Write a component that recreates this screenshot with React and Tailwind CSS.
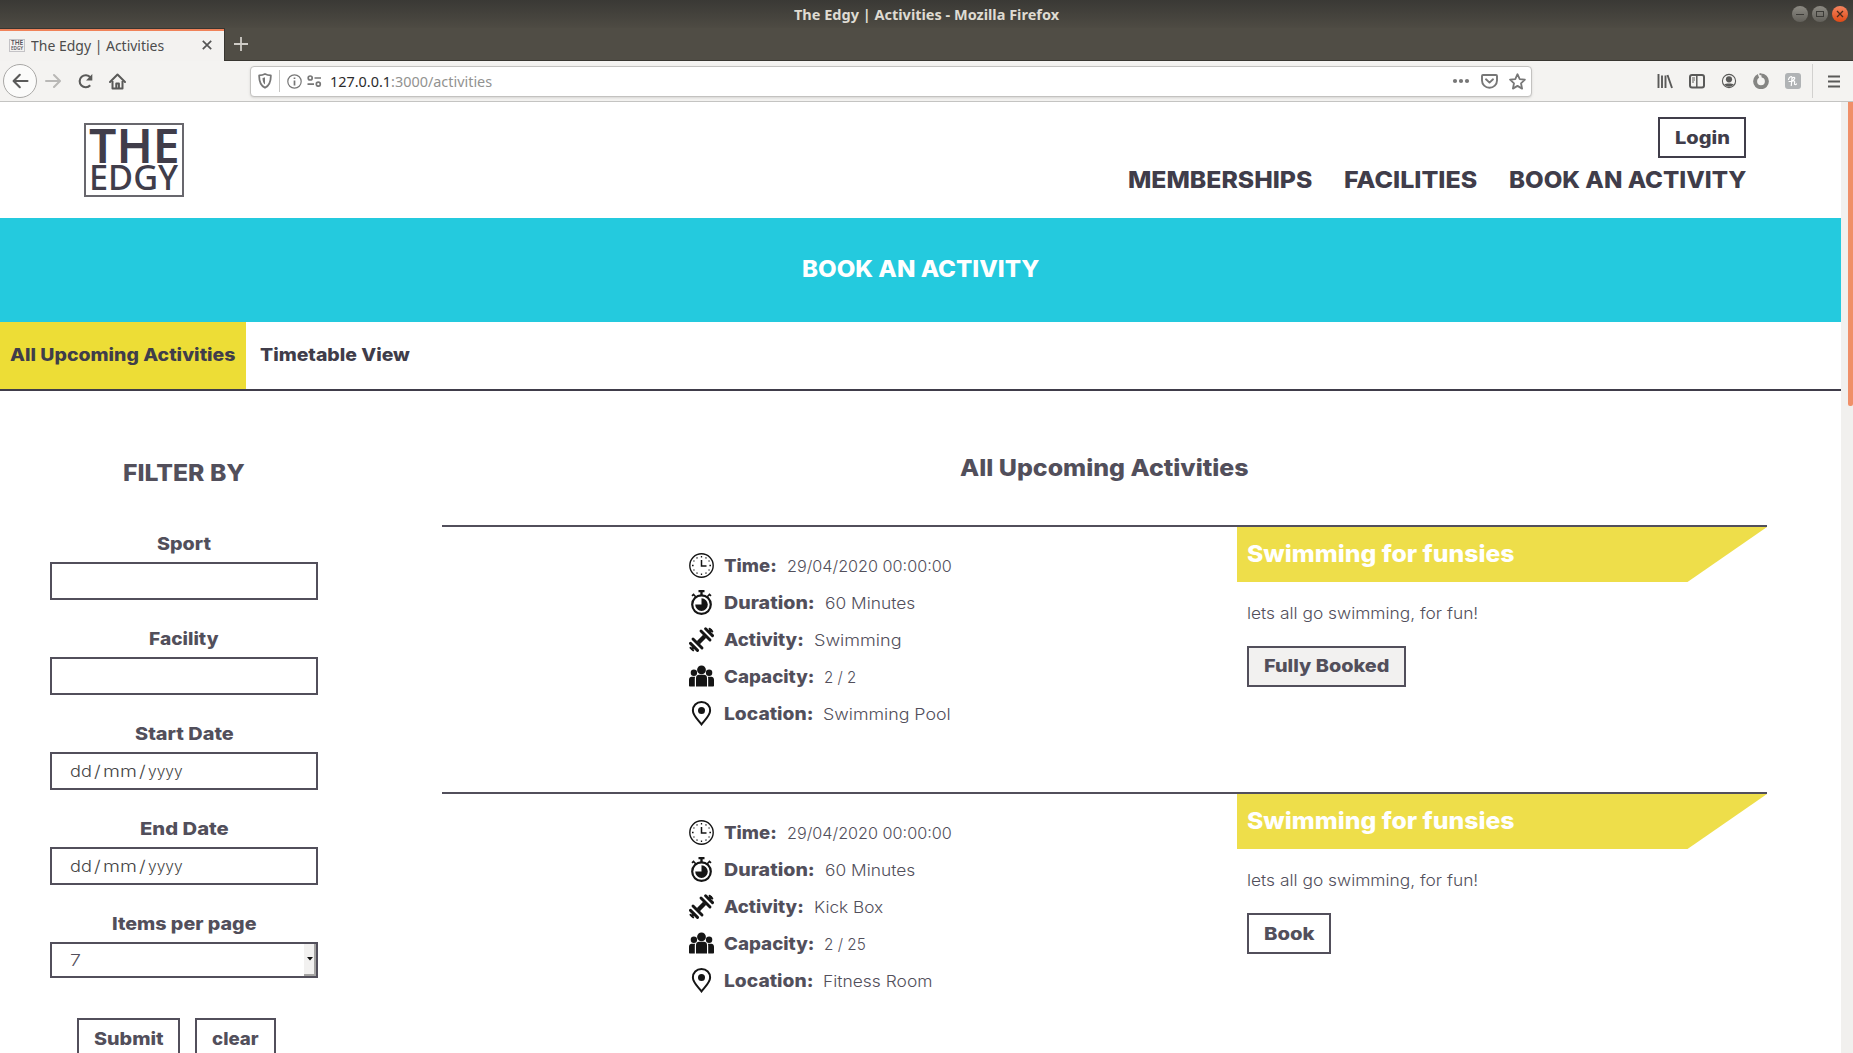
import React, { useLayoutEffect, useRef, useState } from "react";

/* Text set to a fixed measure: the glyphs are widened or narrowed to fill w pixels. */
function Fit({ w, className = "", children }) {
  const ref = useRef(null);
  const [scale, setScale] = useState(1);
  useLayoutEffect(() => {
    setScale(w / ref.current.offsetWidth);
  }, [w]);
  return (
    <span className={"inline-block text-left whitespace-pre shrink-0 " + className} style={{ width: w }}>
      <span ref={ref} className="inline-block origin-left" style={{ transform: `scaleX(${scale})` }}>
        {children}
      </span>
    </span>
  );
}

function WindowButton({ kind }) {
  const close = kind === "close";
  return (
    <svg width="16" height="18" viewBox="0 0 16 18">
      <defs>
        <linearGradient id={"wb-" + kind} x1="0" y1="0" x2="0" y2="1">
          <stop offset="0" stopColor={close ? "#f4845f" : "#8c8a83"} />
          <stop offset="1" stopColor={close ? "#df4a16" : "#62605a"} />
        </linearGradient>
      </defs>
      <circle cx="8" cy="9" r="8" fill={`url(#wb-${kind})`} />
      {kind === "min" && <path d="M4 9.5h8" stroke="#3c3b37" />}
      {kind === "max" && <rect x="4.5" y="6.5" width="7" height="5" fill="none" stroke="#3c3b37" />}
      {close && <path d="M5 6l6 6M11 6l-6 6" stroke="#4a2a1c" strokeWidth="1.3" />}
    </svg>
  );
}

function TitleBar() {
  return (
    <div className="h-[28px] relative flex items-center justify-center bg-linear-to-b from-[#3a3935] to-[#4e4b43] font-['Noto_Sans'] font-bold text-[14.5px] leading-[28px] text-[#dfdbd2]">
      <Fit w={265} className="-mt-px">The Edgy | Activities - Mozilla Firefox</Fit>
      <div className="absolute right-[5px] top-[5px] flex gap-1">
        <WindowButton kind="min" />
        <WindowButton kind="max" />
        <WindowButton kind="close" />
      </div>
    </div>
  );
}

function TabStrip() {
  return (
    <div className="h-[33px] flex bg-[#504d45]">
      <div className="w-[225px] h-full border-t border-r border-[#383631]">
        <div className="h-full border-t-2 border-[#f0835a] bg-[#f3f2f0] flex items-center pl-[9px] pb-[2px]">
          <div className="w-[16px] h-[13px] border border-[#c4c3c6] flex flex-col items-center justify-center text-[#55535c] font-['Noto_Sans'] font-semibold">
            <Fit w={12} className="text-[6.5px] leading-[6px]">THE</Fit>
            <Fit w={12} className="text-[5px] leading-[5px]">EDGY</Fit>
          </div>
          <Fit w={133} className="ml-[6px] -mt-px font-['Noto_Sans'] text-[14.5px] leading-[20px] text-[#4c4c4c]">The Edgy | Activities</Fit>
          <svg className="ml-[38px]" width="10" height="10" viewBox="0 0 10 10">
            <path d="M.8.8l8.4 8.4M9.2.8L.8 9.2" stroke="#555" strokeWidth="1.7" />
          </svg>
        </div>
      </div>
      <div className="flex-1 border-b border-[#383631] pl-[9px] pt-[9px]">
        <svg width="14" height="14" viewBox="0 0 14 14">
          <path d="M7 0v14M0 7h14" stroke="#cfccc6" strokeWidth="1.8" />
        </svg>
      </div>
    </div>
  );
}

function Toolbar() {
  return (
    <div className="h-[41px] flex items-center bg-[#f4f3f1] border-b border-[#c4c4c2] pl-[3px]">
      <div className="w-[34px] h-[34px] rounded-full border border-[#a9a8a6] bg-[#fbfbfa] flex items-center justify-center">
        <svg width="17" height="16" viewBox="0 0 17 16" fill="none" stroke="#5a5a59" strokeWidth="2.1" strokeLinecap="round" strokeLinejoin="round">
          <path d="M15.5 8H1.8M7.8 1.8L1.6 8l6.2 6.2" />
        </svg>
      </div>
      <svg className="ml-2" width="16" height="16" viewBox="0 0 16 16" fill="none" stroke="#b9b8b6" strokeWidth="2" strokeLinecap="round" strokeLinejoin="round">
        <path d="M1 8h13.5M9 2l6 6-6 6" />
      </svg>
      <svg className="ml-4" width="17" height="16" viewBox="0 0 17 16" fill="none" stroke="#5a5a59" strokeWidth="2.1">
        <path d="M13.2 12.2A6 6 0 1 1 13.4 4.6" />
        <path d="M15.3 1v6.4H9z" fill="#5a5a59" stroke="none" />
      </svg>
      <svg className="ml-[15px]" width="17" height="17" viewBox="0 0 17 17" fill="none" stroke="#5a5a59" strokeWidth="2" strokeLinejoin="round">
        <path d="M1 9l7.5-7.5L16 9" strokeLinecap="round" />
        <path d="M3.5 8v7.5h10V8M7.3 15.5v-5h2.6v5" />
      </svg>
      <div className="ml-[124px] w-[1282px] h-[31px] shrink-0 rounded-[4px] border border-[#c3c2c0] bg-white shadow-sm flex items-center pl-[7px]">
        <svg width="14" height="16" viewBox="0 0 14 16" fill="none" stroke="#777" strokeWidth="1.8" strokeLinejoin="round">
          <path d="M7 1C5 2 3 2.3 1.2 2.3 1 8.500 2.500 12.500 7 14.800c4.500-2.300 6-6.300 5.800-12.500C11 2.300 9 2 7 1z" />
          <path d="M7 4.300c-1 .5-1.600.6-2.500.7.1 3.200.8 5.200 2.500 6.500z" fill="#777" stroke="none" />
        </svg>
        <div className="ml-[7px] w-px h-[22px] bg-[#c6c6c4]" />
        <svg className="ml-[7px]" width="15" height="15" viewBox="0 0 15 15" fill="none" stroke="#777">
          <circle cx="7.500" cy="7.500" r="6.700" strokeWidth="1.200" />
          <path d="M7.500 6.500v5M7.500 3.400v1.700" strokeWidth="1.700" />
        </svg>
        <svg className="ml-[5px]" width="15" height="12" viewBox="0 0 15 12" fill="none" stroke="#777" strokeWidth="1.700">
          <circle cx="3.200" cy="3" r="2" />
          <path d="M7.500 3H14M.5 9.200h6.500" />
          <circle cx="11.300" cy="9.200" r="2" />
        </svg>
        <Fit w={162} className="ml-[8px] font-['Noto_Sans'] text-[14.5px] leading-[28px] text-[#929290]">
          <span className="text-[#2b2b2b]">127.0.0.1</span>:3000/activities
        </Fit>
        <div className="flex-1" />
        <svg width="18" height="6" viewBox="0 0 18 6" fill="#777">
          <circle cx="3" cy="3" r="2.100" /><circle cx="9" cy="3" r="2.100" /><circle cx="15" cy="3" r="2.100" />
        </svg>
        <svg className="ml-[11px]" width="17" height="15" viewBox="0 0 17 15" fill="none" stroke="#777" strokeWidth="1.900" strokeLinecap="round" strokeLinejoin="round">
          <path d="M2 1h13c.5 0 1 .4 1 1v4.500a7.500 7.200 0 0 1-15 0V2c0-.6.500-1 1-1z" />
          <path d="M5 5.300l3.500 3.300L12 5.300" />
        </svg>
        <svg className="ml-[11px] mr-[5px]" width="17" height="17" viewBox="0 0 17 17" fill="none" stroke="#777" strokeWidth="1.800" strokeLinejoin="round">
          <path d="M8.500 1.200l2.200 4.900 5.200.6-3.900 3.600 1.100 5.300-4.600-2.700-4.600 2.700L5 10.300 1.100 6.700l5.200-.6z" />
        </svg>
      </div>
      <div className="ml-[125px] flex items-center gap-4">
        <svg width="16" height="16" viewBox="0 0 16 16" fill="none" stroke="#5a5a59" strokeWidth="1.900">
          <path d="M1.500 1v14M5 2.500V15M8.500 2.500V15M10.500 2l4.500 13" />
        </svg>
        <svg width="16" height="16" viewBox="0 0 16 16" fill="none" stroke="#5a5a59">
          <rect x="1" y="2" width="14" height="12.500" rx="2" strokeWidth="2" />
          <path d="M7.800 2v12" strokeWidth="1.500" />
          <path d="M3 5h3M3 7h3M3 9h2" />
        </svg>
        <svg width="16" height="16" viewBox="0 0 16 16" fill="none" stroke="#5a5a59">
          <circle cx="8" cy="8" r="6.600" strokeWidth="1.100" />
          <circle cx="8" cy="6.300" r="3.100" fill="#5a5a59" stroke="none" />
          <path d="M3.200 11.200c1.500-1 8.100-1 9.600 0-1.800 3.300-7.800 3.300-9.600 0z" fill="#5a5a59" stroke="none" />
        </svg>
        <svg width="16" height="16" viewBox="0 0 16 16">
          <circle cx="8" cy="8.300" r="5.900" fill="none" stroke="#858583" strokeWidth="4" />
          <path d="M4.500 0l3.500 1 .8 4-2.500.6z" fill="#f4f3f1" />
          <circle cx="7.300" cy="1.200" r="1" fill="#858583" />
        </svg>
        <svg width="16" height="16" viewBox="0 0 16 16">
          <rect width="16" height="16" rx="3" fill="#b0b3b5" />
          <path d="M3.500 6.500c1-3 3.500-3.500 3.500-2L6.300 12.500M7 5.500c2.500-2.500 4.500-.5.200 2.500 2.500-.5 2.800 0 2.300 2-.3 1.700.7 2.200 2 1M4 8.500h3" fill="none" stroke="#fff" strokeWidth="1.200" strokeLinecap="round" />
        </svg>
      </div>
      <div className="ml-[11px] w-px h-[34px] bg-[#d2d1cf]" />
      <svg className="ml-[15px]" width="12" height="13" viewBox="0 0 12 13">
        <path d="M0 1.500h12M0 6.500h12M0 11.500h12" stroke="#5a5a59" strokeWidth="2" />
      </svg>
    </div>
  );
}

function Logo() {
  return (
    <div className="mt-[21px] w-[100px] h-[74px] border-2 border-[#68676d] flex flex-col items-start pl-[3px] pt-[2px] font-['Noto_Sans'] text-[#403d4a]">
      <Fit w={91} className="font-semibold text-[46px] leading-[36px]">THE</Fit>
      <Fit w={89} className="font-medium text-[33.5px] leading-[28px]">EDGY</Fit>
    </div>
  );
}

function Header() {
  return (
    <header className="h-[116px] flex justify-between pl-[84px] pr-[95px] text-[#403d4a]">
      <Logo />
      <div className="flex flex-col items-end pt-[15px]">
        <button className="w-[88px] h-[41px] border-2 border-[#403d4a] flex items-center justify-center pt-[2px] font-extrabold text-[17.5px]">
          <Fit w={55}>Login</Fit>
        </button>
        <nav className="mt-[6px] flex gap-[32px] font-extrabold text-[23.3px] leading-[32px]">
          <Fit w={184}>MEMBERSHIPS</Fit>
          <Fit w={133}>FACILITIES</Fit>
          <Fit w={237}>BOOK AN ACTIVITY</Fit>
        </nav>
      </div>
    </header>
  );
}

function SubNav() {
  return (
    <nav className="h-[69px] flex border-b-2 border-[#403d4a] text-[#403d4a] font-extrabold text-[17.5px] leading-[66px]">
      <div className="w-[246px] bg-[#eddd36] pl-[10px]"><Fit w={226}>All Upcoming Activities</Fit></div>
      <div className="pl-[14px]"><Fit w={150}>Timetable View</Fit></div>
    </nav>
  );
}

function Field({ label, w, children, className }) {
  return (
    <label className="flex flex-col items-center mb-[27px]">
      <Fit w={w} className="font-extrabold text-[17.5px] leading-[24px] mb-[6px]">{label}</Fit>
      <div className={"w-[268px] border-2 border-[#524f5b] flex items-center " + className}>{children}</div>
    </label>
  );
}

function DateParts() {
  return (
    <div className="flex ml-[18px] font-light text-[16.5px] text-[#454545]">
      <Fit w={22}>dd</Fit>
      <Fit w={7} className="ml-[2px]">/</Fit>
      <Fit w={34} className="ml-[2px]">mm</Fit>
      <Fit w={7} className="ml-[2px]">/</Fit>
      <Fit w={35} className="ml-[2px]">yyyy</Fit>
    </div>
  );
}

function Filters() {
  return (
    <aside className="w-[368px] shrink-0 flex flex-col items-center pt-[66px] text-[#524f5b]">
      <Fit w={122} className="font-extrabold text-[23.3px] leading-[32px]">FILTER BY</Fit>
      <form className="mt-[43px]">
        <Field label="Sport" w={54} className="h-[38px]" />
        <Field label="Facility" w={70} className="h-[38px]" />
        <Field label="Start Date" w={99} className="h-[38px]"><DateParts /></Field>
        <Field label="End Date" w={89} className="h-[38px]"><DateParts /></Field>
        <Field label="Items per page" w={145} className="h-[36px] justify-between">
          <Fit w={11} className="ml-[18px] font-light text-[16px]">7</Fit>
          <div className="w-[12px] h-full bg-[#f2f1f0] border-r-2 border-b-2 border-[#a5a4a3] flex items-center justify-center">
            <svg className="shrink-0 ml-[2px]" width="6" height="4" viewBox="0 0 6 4"><path d="M0 0h6L3 3.500z" fill="#111" /></svg>
          </div>
        </Field>
        <div className="mt-[40px] ml-[27px] flex gap-[15px] font-extrabold text-[17.5px]">
          <button type="button" className="w-[103px] h-[41px] border-2 border-[#524f5b] flex items-center justify-center pt-[2px]"><Fit w={70}>Submit</Fit></button>
          <button type="button" className="w-[81px] h-[41px] border-2 border-[#524f5b] flex items-center justify-center pt-[2px]"><Fit w={47}>clear</Fit></button>
        </div>
      </form>
    </aside>
  );
}

const ICONS = {
  time: (
    <g fill="none" stroke="#151515">
      <circle cx="12.500" cy="12.500" r="11.700" strokeWidth="1.400" />
      <path d="M12.500 7v6h5" strokeWidth="1.500" />
      <path d="M12.500 3v1.600M12.500 20.400V22M3 12.500h1.600M20.400 12.500H22M7.700 4.400l.6 1.100M16.700 19.500l.6 1.100M4.400 7.700l1.100.6M19.500 16.700l1.100.6M17.300 4.400l-.6 1.100M8.300 19.500l-.6 1.100M20.600 7.700l-1.100.6M5.500 16.700l-1.100.6" strokeWidth="1.300" />
    </g>
  ),
  duration: (
    <g fill="none" stroke="#151515">
      <circle cx="12.500" cy="14.600" r="9.300" strokeWidth="2.200" />
      <path d="M9.500 1.200h6M12.500 1v4" strokeWidth="2.300" />
      <path d="M3 5.800l2.200-2M22 5.800l-2.200-2M5 5l2.500 2.500M20 5l-2.500 2.500" strokeWidth="1.700" />
      <path d="M12.500 8.300v6.300H6.200a6.300 6.300 0 1 0 6.300-6.300z" fill="#151515" stroke="none" />
    </g>
  ),
  activity: (
    <g stroke="#151515" fill="none" strokeLinecap="round">
      <path d="M9.300 15.700l6.400-6.400" strokeWidth="4.400" strokeLinecap="butt" />
      <path d="M12 4l9 9M4 12l9 9" strokeWidth="2.900" />
      <path d="M16.600 1.700l6.900 6.900M1.500 16.400l7 7" strokeWidth="2.900" />
      <path d="M20.600 1.800l2.700 2.700M1.500 20.700l2.700 2.700" strokeWidth="2" />
      <path d="M20 5l2-2M3 22l2-2" strokeWidth="2.400" />
    </g>
  ),
  capacity: (
    <g fill="#151515">
      <circle cx="12.500" cy="5.900" r="4.400" />
      <circle cx="4.900" cy="8.800" r="3.200" />
      <circle cx="20.100" cy="8.800" r="3.200" />
      <path d="M7 22.500v-8.500c0-2.200 1.500-3.300 3-3.300h5c1.500 0 3 1.100 3 3.300v8.500z" />
      <path d="M0 21.500v-5.800c0-2 1.300-3 2.600-3h3.500c-.2.800-.3 1.300-.3 2v7.800H1c-.6 0-1-.4-1-1zM25 21.500v-5.800c0-2-1.300-3-2.600-3h-3.500c.2.800.3 1.300.3 2v7.800H24c.6 0 1-.4 1-1z" />
    </g>
  ),
  location: (
    <g>
      <path d="M12.500 1.100C7.300 1.100 3.900 4.900 3.900 9.400c0 5 5 9.200 8.600 14 3.600-4.800 8.600-9 8.600-14 0-4.500-3.400-8.300-8.600-8.300z" fill="none" stroke="#151515" strokeWidth="2" />
      <circle cx="12.500" cy="9.600" r="3.500" fill="#151515" />
    </g>
  ),
};

const ROWS = [
  ["time", "Time:", 53],
  ["duration", "Duration:", 91],
  ["activity", "Activity:", 80],
  ["capacity", "Capacity:", 90],
  ["location", "Location:", 89],
];

const ACTIVITIES = [
  {
    details: [["29/04/2020 00:00:00", 165], ["60 Minutes", 90], ["Swimming", 88], ["2 / 2", 32], ["Swimming Pool", 128]],
    action: "Fully Booked", actionW: 126, button: "w-[159px] bg-[#f2f1f0]",
  },
  {
    details: [["29/04/2020 00:00:00", 165], ["60 Minutes", 90], ["Kick Box", 69], ["2 / 25", 42], ["Fitness Room", 110]],
    action: "Book", actionW: 51, button: "w-[84px] bg-white pt-[2px]",
  },
];

function Activity({ item }) {
  return (
    <article className="h-[267px] border-t-2 border-[#524f5b] flex">
      <div className="w-[795px] pl-[247px] pt-[26px] flex flex-col gap-[12px]">
        {ROWS.map(([icon, label, w], i) => (
          <div key={icon} className="h-[25px] flex items-center">
            <svg width="25" height="25" viewBox="0 0 25 25">{ICONS[icon]}</svg>
            <Fit w={w} className="ml-[10px] mt-px font-extrabold text-[17.5px]">{label}</Fit>
            <Fit w={item.details[i][1]} className="ml-[9.5px] mt-px font-light text-[16px]">{item.details[i][0]}</Fit>
          </div>
        ))}
      </div>
      <div className="w-[530px]">
        <div className="h-[55px] bg-[#eede4a] [clip-path:polygon(0_0,100%_0,85%_100%,0_100%)] pl-[10px] font-extrabold text-[23.3px] leading-[53px] text-white">
          <Fit w={268}>Swimming for funsies</Fit>
        </div>
        <div className="pl-[10px] pt-[19px] flex flex-col items-start">
          <Fit w={231} className="h-[45px] font-light text-[16px] leading-[24px]">lets all go swimming, for fun!</Fit>
          <button className={"h-[41px] border-2 border-[#524f5b] flex items-center justify-center font-extrabold text-[17.5px] " + item.button}>
            <Fit w={item.actionW}>{item.action}</Fit>
          </button>
        </div>
      </div>
    </article>
  );
}

export default function App() {
  return (
    <div className="w-[1853px] h-[1053px] overflow-hidden flex flex-col bg-white">
      <div className="shrink-0">
        <TitleBar />
        <TabStrip />
        <Toolbar />
      </div>
      <div className="flex-1 min-h-0 flex">
        <main className="w-[1841px] h-full overflow-hidden font-['Inter',sans-serif]">
          <Header />
          <div className="h-[104px] bg-[#24cade] flex items-center justify-center text-white font-extrabold text-[23.3px] pb-[2px]">
            <Fit w={237}>BOOK AN ACTIVITY</Fit>
          </div>
          <SubNav />
          <div className="flex">
            <Filters />
            <section className="ml-[74px] w-[1325px] pt-[61px] text-[#524f5b]">
              <h2 className="h-[73px] text-center font-extrabold text-[23.3px] leading-[32px]">
                <Fit w={289}>All Upcoming Activities</Fit>
              </h2>
              {ACTIVITIES.map((item) => <Activity key={item.action} item={item} />)}
            </section>
          </div>
        </main>
        <div className="w-[12px] bg-[#f1f0ee] flex justify-end">
          <div className="w-[5px] h-[304px] bg-[#f08f68] rounded-b-xs" />
        </div>
      </div>
    </div>
  );
}
